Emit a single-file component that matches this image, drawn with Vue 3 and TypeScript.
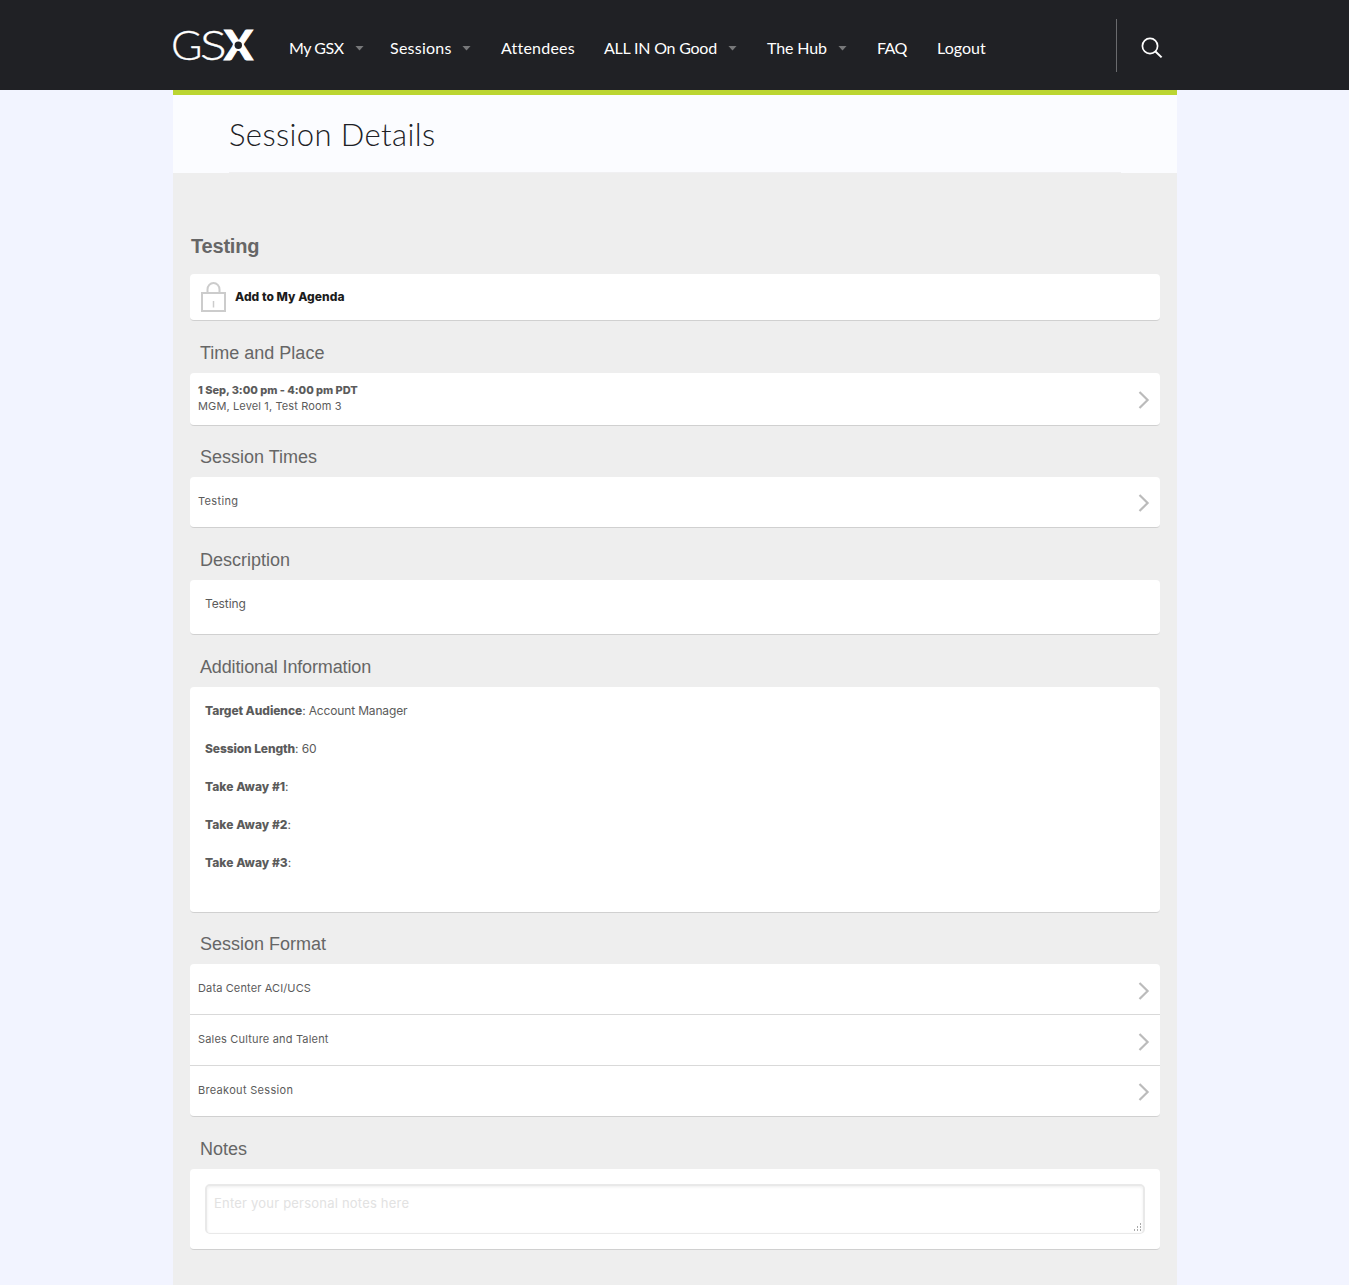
<script setup lang="ts">
import { ref } from 'vue'

interface NavItem { label: string; menu: boolean; width: number; tracking: number }
interface InfoRow { label: string; value: string; tracking: number }
interface FormatRow { label: string; tracking: number }

const nav: NavItem[] = [
  { label: 'My GSX', menu: true, width: 101, tracking: -0.45 },
  { label: 'Sessions', menu: true, width: 111, tracking: 0.25 },
  { label: 'Attendees', menu: false, width: 103, tracking: 0.22 },
  { label: 'ALL IN On Good', menu: true, width: 163, tracking: -0.22 },
  { label: 'The Hub', menu: true, width: 110, tracking: -0.12 },
  { label: 'FAQ', menu: false, width: 60, tracking: -0.6 },
  { label: 'Logout', menu: false, width: 60, tracking: 0.02 },
]

const info: InfoRow[] = [
  { label: 'Target Audience', value: ': Account Manager', tracking: -0.07 },
  { label: 'Session Length', value: ': 60', tracking: -0.1 },
  { label: 'Take Away #1', value: ':', tracking: 0.03 },
  { label: 'Take Away #2', value: ':', tracking: 0.03 },
  { label: 'Take Away #3', value: ':', tracking: 0.03 },
]

const formats: FormatRow[] = [
  { label: 'Data Center ACI/UCS', tracking: 0.13 },
  { label: 'Sales Culture and Talent', tracking: 0.18 },
  { label: 'Breakout Session', tracking: 0.31 },
]

const notes = ref('')
</script>

<template>
  <div class="page">
    <header class="topbar">
      <div class="bar">
        <svg class="logo" width="84" height="48" viewBox="0 -6 84 48" role="img" aria-label="GSX">
          <text class="logo-thin" x="-2" y="33.100" textLength="31.500" lengthAdjust="spacingAndGlyphs">G</text>
          <text class="logo-thin" x="26.700" y="33.100" textLength="27" lengthAdjust="spacingAndGlyphs">S</text>
          <text class="logo-heavy" x="51" y="33.100" textLength="29" lengthAdjust="spacingAndGlyphs">X</text>
          <circle cx="65.300" cy="18.300" r="5.600" fill="#fff" />
          <circle cx="65.300" cy="18.300" r="3.700" fill="#202125" />
        </svg>
        <nav class="nav">
          <a v-for="item in nav" :key="item.label" class="nav-item" :style="{ width: item.width + 'px' }">
            <span :style="{ letterSpacing: item.tracking + 'px' }">{{ item.label }}</span>
            <i v-if="item.menu" class="caret"></i>
          </a>
        </nav>
        <button class="search" aria-label="Search">
          <svg width="22" height="22" viewBox="0 0 22 22" fill="none" stroke="#fff">
            <circle cx="9" cy="9" r="7.600" stroke-width="1.700" />
            <path d="M14.200 14.200L20.600 20.400" stroke-width="2" />
          </svg>
        </button>
      </div>
    </header>

    <main class="content">
      <div class="title-band"><h1>Session Details</h1></div>

      <div class="body">
        <h2 class="session-name">Testing</h2>
        <section class="card agenda">
          <svg width="25" height="30" viewBox="0 0 25 30" fill="none" stroke="#ccc" stroke-width="2">
            <rect x="1" y="11" width="23" height="18" />
            <path d="M6.500 11V7.500a6 6.500 0 0 1 12 0V11" />
            <path d="M12.500 19v6.500" stroke-width="1.500" />
          </svg>
          <strong>Add to My Agenda</strong>
        </section>

        <h3>Time and Place</h3>
        <section class="card place">
          <div>
            <strong>1 Sep, 3:00 pm - 4:00 pm PDT</strong>
            <p>MGM, Level 1, Test Room 3</p>
          </div>
          <svg class="chevron" width="12" height="18" viewBox="0 0 12 18"><path d="M1.500 1L9.600 9L1.500 17" /></svg>
        </section>

        <h3 class="tight">Session Times</h3>
        <section class="card">
          <div class="row">
            <span class="wide">Testing</span>
            <svg class="chevron" width="12" height="18" viewBox="0 0 12 18"><path d="M1.500 1L9.600 9L1.500 17" /></svg>
          </div>
        </section>

        <h3>Description</h3>
        <section class="card description">Testing</section>

        <h3 class="dense">Additional Information</h3>
        <section class="card info">
          <p v-for="row in info" :key="row.label">
            <strong :style="{ letterSpacing: row.tracking + 'px' }">{{ row.label }}</strong>{{ row.value }}
          </p>
        </section>

        <h3 class="tight">Session Format</h3>
        <section class="card">
          <div v-for="row in formats" :key="row.label" class="row">
            <span :style="{ letterSpacing: row.tracking + 'px' }">{{ row.label }}</span>
            <svg class="chevron" width="12" height="18" viewBox="0 0 12 18"><path d="M1.500 1L9.600 9L1.500 17" /></svg>
          </div>
        </section>

        <h3>Notes</h3>
        <section class="card notes">
          <div class="field">
            <textarea v-model="notes" placeholder="Enter your personal notes here"></textarea>
            <svg class="grip" width="9" height="9" viewBox="0 0 9 9" fill="#aaa">
              <path d="M7 0h1v2H7zM4 3h1v2H4zM7 3h1v2H7zM1 6h1v2H1zM4 6h1v2H4zM7 6h1v2H7z" />
            </svg>
          </div>
        </section>
      </div>
    </main>
  </div>
</template>

<style>
body { background: #f2f4ff; }
</style>

<style scoped>
* { box-sizing: border-box; }
.page { height: 1285px; display: flex; flex-direction: column; overflow: hidden; background: #f2f4ff; }
.topbar { flex: none; height: 90px; background: #202125; }
.bar { width: 1004px; height: 90px; margin-left: 173px; display: flex; align-items: center; }
.logo { flex: none; width: 84px; margin-right: 32px; overflow: visible; }
.logo text { font-family: Lato, sans-serif; font-size: 41px; fill: #fff; stroke: #fff; }
.logo-thin { font-weight: 300; stroke-width: 0.3px; }
.logo-heavy { font-weight: 900; stroke-width: 1px; }
.nav { display: flex; flex: 1; padding-top: 6px; }
.nav-item { display: flex; align-items: center; height: 24px; color: #fff; font: 400 16px/24px Lato, sans-serif; white-space: nowrap; }
.caret { width: 9px; height: 5px; margin: 0 30px 0 auto; background: #77787a; clip-path: polygon(0 0, 100% 0, 50% 100%); }
.nav-item:first-child .caret { margin-right: 26px; }
.search { width: 61px; height: 53px; margin-top: 1px; padding: 5px 0 0 24px; border: 0; border-left: 1px solid #6a6b6e; background: none; display: flex; align-items: center; }
.search svg { display: block; }
.content { flex: 1; width: 1004px; margin-left: 173px; border-top: 5px solid #bbd531; background: #eee; }
.title-band { height: 78px; padding: 0 56px; background: #fbfcff; }
h1 { height: 78px; margin: 0; border-bottom: 1px solid #f0f0f2; color: #202125; font: 300 31px/78px Lato, sans-serif; letter-spacing: 0.4px; }
.body { padding: 0 17px; color: #5b5b5b; }
.session-name { height: 101px; margin: 0; padding: 61px 0 0 1px; color: #666; font: bold 20px/24px 'Liberation Sans', sans-serif; letter-spacing: -0.2px; }
h3 { height: 52px; margin: 0; padding: 22px 0 0 10px; color: #666; font: 400 18px/20px 'Liberation Sans', sans-serif; }
h3.tight { height: 51px; padding-top: 21px; }
h3.dense { letter-spacing: -0.14px; }
.card { background: #fff; border-radius: 4px; border-bottom: 1px solid #d0d0d0; font: 400 12px/19px Inter, sans-serif; }
.card strong { font-weight: 800; }
.card p { margin: 0; }
.agenda { height: 47px; display: flex; align-items: center; padding-left: 11px; gap: 9px; color: #1c1c1c; }
.agenda strong { padding-bottom: 2px; letter-spacing: 0.04px; }
.place { height: 53px; display: flex; justify-content: space-between; align-items: center; padding: 0 10px 0 8px; font-size: 11px; line-height: 16px; }
.place div { padding-bottom: 2px; }
.place .chevron { margin-top: 2px; }
.place strong { display: block; letter-spacing: -0.04px; }
.place p { letter-spacing: 0.13px; }
.row { height: 51px; display: flex; justify-content: space-between; align-items: center; padding: 2px 10px 0 8px; border-bottom: 1px solid #d9d9d9; font-size: 11px; }
.row:last-child { height: 50px; border-bottom: 0; }
.row:not(:last-child) .chevron { margin-top: 2px; }
.row span { margin-bottom: 4px; }
.row .wide { letter-spacing: 0.34px; }
.chevron { flex: none; fill: none; stroke: #bbb; stroke-width: 2.2px; }
.description { height: 55px; padding: 14px 15px; letter-spacing: -0.1px; }
.info { height: 226px; padding: 14px 15px; }
.info p { margin-bottom: 19px; letter-spacing: -0.15px; }
.notes { height: 81px; padding: 15px; }
.field { position: relative; height: 50px; }
textarea { display: block; width: 940px; height: 50px; padding: 8px 7px; border: 2px solid #e9e9e9; border-bottom-width: 1px; border-radius: 5px; outline: none; resize: none; background: #fff; box-shadow: inset 0 1px 3px #eee; color: #555; font: 400 13px/18px Inter, sans-serif; letter-spacing: 0.21px; }
textarea::placeholder { color: #e2e2e2; opacity: 1; }
.grip { position: absolute; right: 3px; bottom: 2px; }
</style>
